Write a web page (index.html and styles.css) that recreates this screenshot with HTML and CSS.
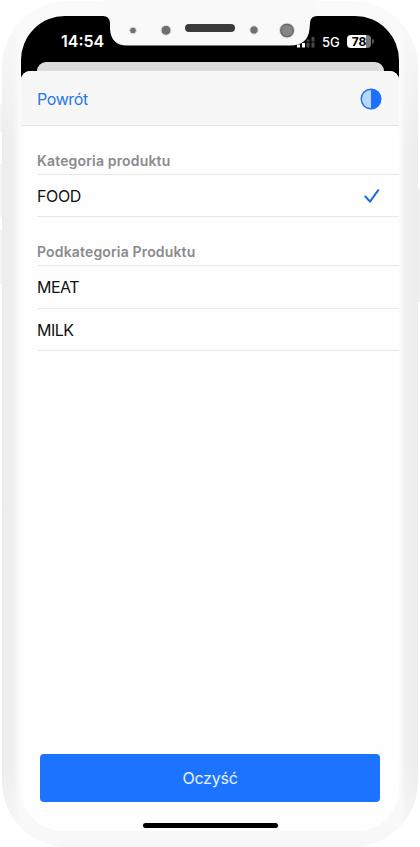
FILE: index.html
```html
<!DOCTYPE html>
<html lang="pl">
<head>
<meta charset="utf-8">
<meta name="viewport" content="width=device-width, initial-scale=1">
<title>Kategoria produktu</title>
<link rel="stylesheet" href="styles.css">
</head>
<body>
<div class="phone">
  <i class="side-button mute"></i>
  <i class="side-button volume-up"></i>
  <i class="side-button volume-down"></i>
  <i class="side-button power"></i>
  <main class="screen">
    <div class="status">
      <span class="time">14:54</span>
      <div class="indicators">
        <svg class="signal" width="20" height="14" viewBox="0 0 20 14"><path fill="#fff" d="M1 9.500h3v3H1zM6 8h3v4.500H6z"/><path fill="#484848" d="M10.500 4.500h3v8h-3zM15.500 2h3v10.500h-3z"/><path stroke="#000" d="M10 7h9"/></svg>
        <span class="network">5G</span>
        <span class="battery">78</span><i class="battery-tip"></i>
      </div>
    </div>
    <div class="back-sheet"></div>
    <div class="sheet">
      <header class="toolbar">
        <a class="back">Powrót</a>
        <svg class="contrast" width="22" height="22" viewBox="0 0 22 22"><circle cx="11" cy="11" r="9.800" fill="#b9d7fb" stroke="#1b70f4" stroke-width="1.400"/><path fill="#1b70ff" d="M11 .800a10.200 10.200 0 0 1 0 20.400z"/></svg>
      </header>
      <section class="group">
        <h2>Kategoria produktu</h2>
        <div class="row"><span>FOOD</span><svg width="16" height="16" viewBox="0 0 16 16"><path d="M1.400 8.500 6 13.700 14.300 2.200" fill="none" stroke="#2169dc" stroke-width="2" stroke-linecap="round" stroke-linejoin="round"/></svg></div>
      </section>
      <section class="group second">
        <h2>Podkategoria Produktu</h2>
        <div class="row meat"><span>MEAT</span></div>
        <div class="row"><span>MILK</span></div>
      </section>
      <button class="clear">Oczyść</button>
      <div class="home"></div>
    </div>
  </main>
  <svg class="notch" width="220" height="46" viewBox="0 0 220 46">
    <path fill="#f9f9f9" d="M3 0V16Q9.500 16 10 23V29Q11 45.500 27 45.500H190Q208 45.500 209.500 29L210 23Q210.500 16 217 16V0z"/>
    <g fill="#707070" stroke="#e8e8e8" stroke-width="1"><circle cx="33" cy="30.500" r="3.400"/><circle cx="66" cy="30.300" r="5"/><circle cx="154" cy="30" r="4.200"/><circle cx="187" cy="30.500" r="7.500"/></g>
    <circle cx="187" cy="30.500" r="6" fill="#858585" stroke="#666" stroke-width=".800"/>
    <rect x="85" y="24" width="50" height="8" rx="4" fill="#3b3b3b"/>
  </svg>
</div>
</body>
</html>
```
FILE: styles.css
```css
* { box-sizing: border-box; }
body {
  margin: 0;
  width: 420px;
  height: 847px;
  overflow: hidden;
  background: #fff;
  font-family: Inter, "Liberation Sans", sans-serif;
}
.phone {
  position: relative;
  width: 416px;
  height: 846px;
  margin: 1px 2px 0;
  padding: 15px 19px 15px;
  border-radius: 66px;
  background: linear-gradient(180deg, #fafafa 0, rgba(250, 250, 250, 0) 150px, rgba(248, 248, 248, 0) 760px, #f7f7f7 846px),
    linear-gradient(90deg, #ececec 0, #f0f0f0 12px, #fcfcfc 18px, #fcfcfc 398px, #f0f0f0 404px, #ececec 416px);
}
.screen {
  display: flex;
  flex-direction: column;
  width: 378px;
  height: 815px;
  overflow: hidden;
  border-radius: 44px 44px 42px 42px;
  background: linear-gradient(#000 0 100px, #fefefe 100px);
}
.status {
  display: flex;
  justify-content: space-between;
  flex: 0 0 46px;
  padding: 15px 25px 0 40px;
  color: #fff;
}
.time { height: 20px; font-size: 16px; font-weight: 600; line-height: 20px; }
.indicators { display: flex; align-items: center; height: 21px; }
.network { margin-left: 6px; width: 19px; font-size: 13px; font-weight: 500; line-height: 20px; }
.battery {
  width: 24px;
  height: 13px;
  margin-left: 6px;
  border-radius: 4px;
  background: linear-gradient(90deg, #fff 79%, #777 79%);
  color: #000;
  font-size: 12px;
  font-weight: 700;
  line-height: 13px;
  text-align: center;
}
.battery-tip { width: 2px; height: 5px; margin-left: 1px; border-radius: 0 2px 2px 0; background: #555; }
.back-sheet { flex: 0 0 9px; margin: 0 15px 0 16px; border-radius: 9px 9px 0 0; background: #dcdcde; }
.sheet {
  display: flex;
  flex: 1;
  flex-direction: column;
  border-radius: 9px 9px 0 0;
  background: #fefefe;
}
.toolbar {
  display: flex;
  align-items: center;
  justify-content: space-between;
  flex: 0 0 55px;
  padding: 1px 17px 0 16px;
  border-bottom: 1px solid #e4e4e4;
  border-radius: 9px 9px 0 0;
  background: #f7f7f7;
}
.back { color: #2478e8; font-size: 16px; letter-spacing: -.4px; }
.group { margin-left: 16px; }
.group h2 {
  height: 49px;
  margin: 0;
  padding-top: 25px;
  border-bottom: 1px solid #e9e9e9;
  color: #8b8b8d;
  font-size: 14px;
  font-weight: 600;
  line-height: 20px;
  letter-spacing: .16px;
}
.row {
  display: flex;
  align-items: center;
  justify-content: space-between;
  height: 42px;
  padding-right: 19px;
  border-bottom: 1px solid #e9e9e9;
  color: #111;
  font-size: 16px;
  letter-spacing: -.35px;
}
.second .row { letter-spacing: -.5px; }
.meat { height: 43px; }
.clear {
  flex: 0 0 48px;
  margin: auto 19px 21px;
  padding: 0;
  border: 0;
  border-radius: 4px;
  background: #1b73ff;
  color: #e9f3ff;
  font: 16px Inter, "Liberation Sans", sans-serif;
  letter-spacing: -.25px;
}
.home { flex: 0 0 5px; width: 135px; margin: 0 0 3px 122px; border-radius: 3px; background: #000; }
.notch { position: absolute; top: -1px; left: 98px; }
.side-button { position: absolute; left: -2px; width: 2px; background: #f4f4f4; }
.mute { top: 103px; height: 28px; }
.volume-up { top: 163px; height: 53px; }
.volume-down { top: 229px; height: 54px; }
.power { top: 188px; left: 416px; height: 113px; background: #eee; }
```
